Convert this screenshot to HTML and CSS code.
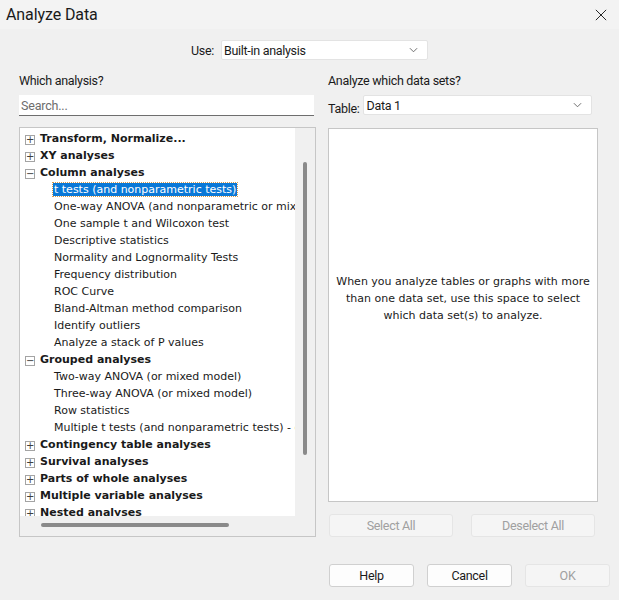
FILE: index.html
```html
<!DOCTYPE html>
<html lang="en">
<head>
    <meta charset="UTF-8">
    <title>Analyze Data</title>
    <link rel="stylesheet" href="styles.css">
</head>
<body>
    <div class="titlebar">
        <span class="title">Analyze Data</span>
        <svg class="close" viewBox="0 0 14 14" fill="none" stroke="#1a1a1a" stroke-width="1.1">
            <path d="M1 1L13 13M13 1L1 13" />
        </svg>
    </div>

    <div class="use-row">
        <label class="lbl">Use:</label>
        <div class="select use-select">
            <span>Built-in analysis</span>
            <svg class="chev" viewBox="0 0 10 6" fill="none" stroke="#606060" stroke-width="1"><path d="M1 1l4 4 4-4" /></svg>
        </div>
    </div>

    <div class="columns">
        <div class="left">
            <div class="heading">Which analysis?</div>
            <div class="search">Search...</div>
            <div class="tree-box">
                <div class="tree">
                    <div class="node group"><span class="exp">+</span>Transform, Normalize...</div>
                    <div class="node group"><span class="exp">+</span>XY analyses</div>
                    <div class="node group"><span class="exp">&minus;</span>Column analyses</div>
                    <div class="node leaf"><span class="selected">t tests (and nonparametric tests)</span></div>
                    <div class="node leaf">One-way ANOVA (and nonparametric or mixed)</div>
                    <div class="node leaf">One sample t and Wilcoxon test</div>
                    <div class="node leaf">Descriptive statistics</div>
                    <div class="node leaf">Normality and Lognormality Tests</div>
                    <div class="node leaf">Frequency distribution</div>
                    <div class="node leaf">ROC Curve</div>
                    <div class="node leaf">Bland-Altman method comparison</div>
                    <div class="node leaf">Identify outliers</div>
                    <div class="node leaf">Analyze a stack of P values</div>
                    <div class="node group"><span class="exp">&minus;</span>Grouped analyses</div>
                    <div class="node leaf">Two-way ANOVA (or mixed model)</div>
                    <div class="node leaf">Three-way ANOVA (or mixed model)</div>
                    <div class="node leaf">Row statistics</div>
                    <div class="node leaf">Multiple t tests (and nonparametric tests) - one per row</div>
                    <div class="node group"><span class="exp">+</span>Contingency table analyses</div>
                    <div class="node group"><span class="exp">+</span>Survival analyses</div>
                    <div class="node group"><span class="exp">+</span>Parts of whole analyses</div>
                    <div class="node group"><span class="exp">+</span>Multiple variable analyses</div>
                    <div class="node group"><span class="exp">+</span>Nested analyses</div>
                </div>
                <div class="vscroll"><div class="vthumb"></div></div>
                <div class="hscroll"><div class="hthumb"></div></div>
                <div class="corner"></div>
            </div>
        </div>

        <div class="right">
            <div class="heading">Analyze which data sets?</div>
            <div class="table-row">
                <label class="lbl table-lbl">Table:</label>
                <div class="select table-select">
                    <span>Data 1</span>
                    <svg class="chev" viewBox="0 0 10 6" fill="none" stroke="#606060" stroke-width="1"><path d="M1 1l4 4 4-4" /></svg>
                </div>
            </div>
            <div class="datasets">
                <p>When you analyze tables or graphs with more than one data set, use this space to select which data set(s) to analyze.</p>
            </div>
            <div class="sel-buttons">
                <button class="btn disabled">Select All</button>
                <button class="btn disabled">Deselect All</button>
            </div>
        </div>
    </div>

    <div class="footer">
        <button class="btn">Help</button>
        <button class="btn">Cancel</button>
        <button class="btn disabled">OK</button>
    </div>
</body>
</html>
```

FILE: styles.css
```css
:root {
    --bg: #f0f0f0;
    --title-bg: #f3f3f3;
    --text: #1a1a1a;
    --border: #c9c9c9;
    --muted: #a0a0a0;
    --select-blue: #0a78d7;
}

body {
    margin: 0;
    width: 619px;
    height: 600px;
    background: var(--bg);
    color: var(--text);
    font-family: Roboto, "Noto Sans", sans-serif;
    font-size: 12px;
    overflow: hidden;
}

.titlebar {
    height: 29px;
    background: var(--title-bg);
    display: flex;
    align-items: center;
    justify-content: space-between;
    padding: 0 12px 0 6px;
}

.title {
    font-size: 16px;
    letter-spacing: -0.1px;
}

.close {
    width: 12px;
    height: 12px;
}

.use-row {
    display: flex;
    align-items: center;
    justify-content: center;
    gap: 7px;
    margin-top: 11px;
}

.lbl {
    font-size: 12.5px;
    letter-spacing: -0.3px;
}

.select {
    box-sizing: border-box;
    height: 20px;
    background: #fff;
    border: 1px solid #e3e3e3;
    border-radius: 2px;
    display: flex;
    align-items: center;
    justify-content: space-between;
    padding: 0 9px 0 2px;
    font-size: 12.5px;
    letter-spacing: -0.3px;
}

.use-select {
    width: 207px;
}

.chev {
    width: 9px;
    height: 6px;
}

.columns {
    display: flex;
    gap: 13px;
    padding-left: 19px;
    margin-top: 13px;
}

.left {
    width: 296px;
}

.right {
    width: 270px;
}

.heading {
    font-size: 12.5px;
    letter-spacing: -0.3px;
    height: 16px;
}

.search {
    box-sizing: border-box;
    margin-top: 6px;
    width: 295px;
    height: 21px;
    background: #fff;
    border-bottom: 1px solid #6e6e6e;
    padding: 3px 2px;
    color: #6d6d6d;
    font-size: 12.5px;
    letter-spacing: -0.2px;
}

.tree-box {
    box-sizing: border-box;
    margin-top: 11px;
    width: 297px;
    height: 410px;
    border: 1px solid #c6c6c6;
    display: grid;
    grid-template-columns: 275px 20px;
    grid-template-rows: 388px 20px;
}

.tree {
    background: #fff;
    overflow: hidden;
    padding-top: 2px;
    font-family: "DejaVu Sans", sans-serif;
    font-size: 11px;
}

.node {
    height: 17px;
    line-height: 17px;
    white-space: nowrap;
}

.group {
    font-weight: bold;
    padding-left: 5px;
}

.leaf {
    padding-left: 34px;
}

.exp {
    display: inline-block;
    box-sizing: border-box;
    width: 10px;
    height: 10px;
    border: 1px solid #a4a4a4;
    margin-right: 5px;
    vertical-align: -1px;
    font-weight: normal;
    font-size: 10px;
    line-height: 7px;
    text-align: center;
    color: #404040;
}

.selected {
    background: var(--select-blue);
    color: #fff;
    outline: 1px dotted #d89a4a;
    padding: 0 1px;
    margin-left: -1px;
}

.vscroll {
    display: flex;
    justify-content: center;
    padding-top: 34px;
}

.vthumb {
    width: 4px;
    height: 293px;
    background: #8a8a8a;
    border-radius: 2px;
}

.hscroll {
    padding: 7px 0 0 21px;
}

.hthumb {
    width: 188px;
    height: 4px;
    background: #8a8a8a;
    border-radius: 2px;
}

.table-row {
    display: flex;
    align-items: flex-end;
    gap: 4px;
    margin-top: 6px;
}

.table-lbl {
    line-height: 12px;
}

.table-select {
    width: 229px;
}

.datasets {
    box-sizing: border-box;
    margin-top: 13px;
    height: 374px;
    background: #fff;
    border: 1px solid #c6c6c6;
    display: flex;
    align-items: center;
    justify-content: center;
    padding: 0 4px 34px;
}

.datasets p {
    margin: 0;
    text-align: center;
    line-height: 17px;
    font-family: "DejaVu Sans", sans-serif;
    font-size: 11px;
}

.sel-buttons {
    display: flex;
    justify-content: space-between;
    margin-top: 12px;
    padding-left: 1px;
    width: 266px;
}

.sel-buttons .btn {
    width: 124px;
}

.btn {
    box-sizing: border-box;
    width: 85px;
    height: 23px;
    background: #fdfdfd;
    border: 1px solid #d0d0d0;
    border-radius: 3px;
    font-family: Roboto, "Noto Sans", sans-serif;
    font-size: 12.5px;
    letter-spacing: -0.3px;
    color: var(--text);
    padding: 0;
}

.btn.disabled {
    background: #f5f5f5;
    border-color: #e5e5e5;
    color: var(--muted);
}

.footer {
    display: flex;
    gap: 13px;
    padding-left: 329px;
    margin-top: 27px;
}
```
